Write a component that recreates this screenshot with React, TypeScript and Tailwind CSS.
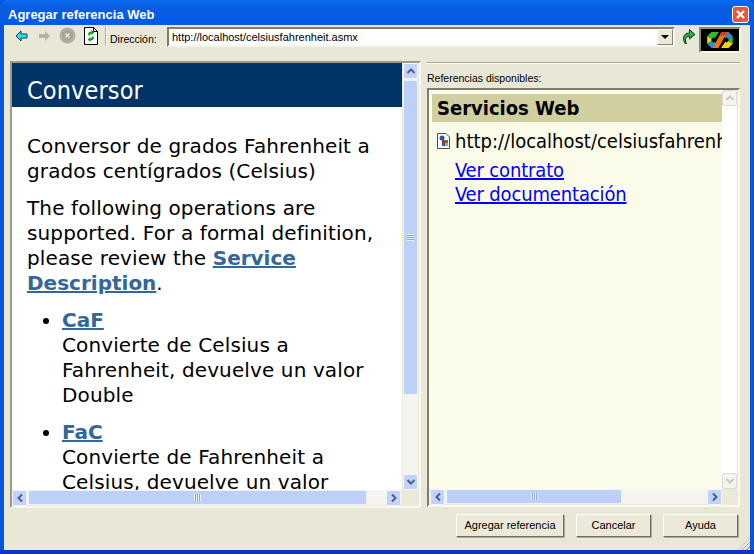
const uiFont = "font-['Liberation_Sans',sans-serif]"

function Chevron({ dir, color = "#4d6185" }: { dir: "up" | "down" | "left" | "right"; color?: string }) {
    const points = {
        up: "1.5,7 5,3.5 8.5,7",
        down: "1.5,3 5,6.5 8.5,3",
        left: "7,1.5 3.5,5 7,8.5",
        right: "3,1.5 6.5,5 3,8.5"
    }[dir]
    return (
        <svg width="10" height="10" viewBox="0 0 10 10">
            <polyline points={points} fill="none" stroke={color} strokeWidth="2" />
        </svg>
    )
}

function ScrollButton({ dir, disabled }: { dir: "up" | "down" | "left" | "right"; disabled?: boolean }) {
    return (
        <div
            className={
                disabled
                    ? "w-[15px] h-[16px] shrink-0 flex items-center justify-center rounded-[2px] border border-[#dcdcd2] bg-[#f4f4ee]"
                    : "w-[15px] h-[16px] shrink-0 flex items-center justify-center rounded-[2px] border border-[#f2f6ff] bg-[#c1d3fb]"
            }
        >
            <Chevron dir={dir} color={disabled ? "#c8c8c0" : "#4d6185"} />
        </div>
    )
}

function HScrollBar({ thumb }: { thumb: number }) {
    return (
        <div className="h-[15px] flex bg-[#f5f4ee]">
            <ScrollButton dir="left" />
            <div
                className="h-[15px] ml-px rounded-[2px] border border-[#eef2fd] bg-[#bcd0f8] flex items-center justify-center shrink-0"
                style={{ width: thumb }}
            >
                <div className="w-[7px] h-[7px] bg-[repeating-linear-gradient(90deg,#eef3fe_0,#eef3fe_1px,#8ba6dc_1px,#8ba6dc_2px)]" />
            </div>
            <div className="flex-1" />
            <ScrollButton dir="right" />
        </div>
    )
}

function Toolbar() {
    return (
        <div className="h-[36px] flex items-start shrink-0">
            <svg className="ml-[11px] mt-[5px]" width="13" height="12" viewBox="0 0 13 12">
                <path d="M6 1 L1 6 L6 11 V8 H12 V4 H6 Z" fill="#2fe0e8" stroke="#06465a" strokeWidth="1" />
            </svg>
            <svg className="ml-[10px] mt-[5px]" width="13" height="12" viewBox="0 0 13 12">
                <path d="M7 1 L12 6 L7 11 V8 H1 V4 H7 Z" fill="#b4b3a6" />
            </svg>
            <svg className="ml-[8px] mt-[2px]" width="17" height="17" viewBox="0 0 17 17">
                <circle cx="8.5" cy="8.5" r="8" fill="#b2b1a4" />
                <circle cx="8.5" cy="8.5" r="5.5" fill="#a5a497" />
                <path d="M6.5 6.5 L10.5 10.5 M10.5 6.5 L6.5 10.5" stroke="#ecebe0" strokeWidth="1.6" />
            </svg>
            <svg className="ml-[8px] mt-[2px]" width="14" height="18" viewBox="0 0 14 18">
                <path d="M1 .5 H9.5 L13.5 4.5 V17.5 H.5 V.5 Z" fill="#fff" stroke="#000" />
                <path d="M9.5 .5 V4.5 H13.5" fill="none" stroke="#000" />
                <path d="M4 8 Q4 4.5 7.5 4.5 L7.5 3 L10.5 5.5 L7.5 8 L7.5 6.5 Q6 6.5 6 8.5 Z" fill="#0e9a28" />
                <path d="M10 10 Q10 13.5 6.5 13.5 L6.5 15 L3.5 12.5 L6.5 10 L6.5 11.5 Q8 11.5 8 9.5 Z" fill="#0e9a28" />
            </svg>
            <div className="ml-[7px] mt-[1px] w-[2px] h-[19px] border-l border-[#aca899] bg-white" />
            <span className={`ml-[3px] mt-[7px] w-[57px] shrink-0 text-[10.5px] leading-[14px] text-black ${uiFont}`}>Dirección:</span>
            <div className="mt-[2px] w-[508px] h-[20px] border-2 border-t-[#7f7d6e] border-l-[#7f7d6e] border-r-[#f6f5ec] border-b-[#f6f5ec] bg-white flex items-center">
                <span className={`flex-1 pl-[3px] text-[11px] leading-[14px] text-black ${uiFont}`}>http://localhost/celsiusfahrenheit.asmx</span>
                <div className="w-[16px] h-[16px] bg-[#ece9d8] border border-t-white border-l-white border-r-[#8a8878] border-b-[#8a8878] flex items-center justify-center">
                    <div className="w-0 h-0 border-x-[4px] border-x-transparent border-t-[4px] border-t-black" />
                </div>
            </div>
            <svg className="ml-[6px] mt-[3px]" width="15" height="17" viewBox="0 0 15 17">
                <path d="M4 15.5 Q0.5 9 5 5.5 L8.5 5 L8.5 1.5 L14 6.5 L8.5 11 L8.5 8 Q5 8.5 4.5 11 Q4 13 5.5 15.5 Z" fill="#2fa84a" stroke="#04431a" strokeWidth="1" />
            </svg>
            <div className="ml-[3px] mt-[2px] w-[42px] h-[26px] border-2 border-t-[#8a8878] border-l-[#8a8878] border-r-[#f6f5ec] border-b-[#f6f5ec] bg-black flex items-center justify-center">
                <svg width="26" height="16" viewBox="0 0 24 15">
                    <path d="M0 4 L4 0 H11 L6 7.5 Z" fill="#35b53a" />
                    <path d="M0 4 V11 L6 7.5 Z" fill="#ecd80e" />
                    <path d="M0 11 L4 15 H11 L6 7.5 Z" fill="#2a8fd8" />
                    <path d="M24 4 L20 0 H13 L18 7.5 Z" fill="#2a8fd8" />
                    <path d="M24 4 V11 L18 7.5 Z" fill="#35b53a" />
                    <path d="M24 11 L20 15 H13 L18 7.5 Z" fill="#ecd80e" />
                    <path d="M6 5 L8.5 7.5 L6 10 L3.5 7.5 Z" fill="#000" />
                    <path d="M18 5 L20.5 7.5 L18 10 L15.5 7.5 Z" fill="#000" />
                    <path d="M13.5 0 H19 L10.5 15 H5 Z" fill="#ef6f17" />
                    <path d="M13.5 0 H19 L17 3.5 H11.5 Z" fill="#e33a12" />
                </svg>
            </div>
        </div>
    )
}

function DocPanel() {
    return (
        <div className="w-[411px] h-[447px] flex flex-col border-2 border-t-[#9b998a] border-l-[#9b998a] border-r-[#f8f7f0] border-b-[#f8f7f0] bg-[#ece9d8]">
            <div className="flex flex-1 min-h-0">
                <div className="w-[390px] bg-white overflow-hidden font-['DejaVu_Sans',sans-serif] text-[20px] leading-[25px] tracking-[0.12px] text-black">
                    <div className="h-[44px] bg-[#003366] text-white pl-[15px] pt-[14px] text-[25px] leading-[28px] font-['DejaVu_Sans_Condensed','DejaVu_Sans',sans-serif]">Conversor</div>
                    <div className="pl-[15px] pr-[6px] pt-[27px]">
                        <p className="whitespace-nowrap">Conversor de grados Fahrenheit a<br />grados centígrados (Celsius)</p>
                        <p className="mt-[12px] whitespace-nowrap">
                            The following operations are<br />
                            supported. For a formal definition,<br />
                            please review the <a className="font-bold tracking-normal text-[#336699] underline">Service</a><br />
                            <a className="font-bold tracking-normal text-[#336699] underline">Description</a>.
                        </p>
                        <ul className="mt-[12px] ml-[35px] list-disc whitespace-nowrap">
                            <li>
                                <a className="font-bold tracking-normal text-[#336699] underline">CaF</a><br />
                                Convierte de Celsius a<br />
                                Fahrenheit, devuelve un valor<br />
                                Double
                            </li>
                            <li className="mt-[12px]">
                                <a className="font-bold tracking-normal text-[#336699] underline">FaC</a><br />
                                Convierte de Fahrenheit a<br />
                                Celsius, devuelve un valor
                            </li>
                        </ul>
                    </div>
                </div>
                <div className="w-[15px] ml-px flex flex-col bg-[#f5f4ee]">
                    <ScrollButton dir="up" />
                    <div className="h-[315px] mt-px rounded-[2px] border border-[#eef2fd] bg-[#bcd0f8] flex items-center justify-center">
                        <div className="w-[7px] h-[7px] bg-[repeating-linear-gradient(0deg,#eef3fe_0,#eef3fe_1px,#8ba6dc_1px,#8ba6dc_2px)]" />
                    </div>
                    <div className="flex-1" />
                    <ScrollButton dir="down" />
                </div>
            </div>
            <div className="w-[389px]">
                <HScrollBar thumb={339} />
            </div>
            <div className="h-px" />
        </div>
    )
}

function ReferencesPanel() {
    return (
        <div className="w-[313px] flex flex-col">
            <div className="mt-[1px] h-[2px] border-t border-[#aca899] bg-white" />
            <div className={`mt-[7px] h-[14px] text-[10.5px] leading-[14px] text-black ${uiFont}`}>Referencias disponibles:</div>
            <div className="mt-[3px] h-[419px] flex flex-col border-2 border-t-[#7f7d6e] border-l-[#7f7d6e] border-r-[#f8f7f0] border-b-[#f8f7f0] bg-[#ece9d8]">
                <div className="flex flex-1 min-h-0">
                    <div className="w-[293px] pl-[3px] pt-[4px] bg-[#fbfbe9] overflow-hidden whitespace-nowrap text-black font-['DejaVu_Sans_Condensed','DejaVu_Sans',sans-serif]">
                        <div className="h-[28px] bg-[#cfcf9f] pl-[5px] font-bold text-[20px] leading-[28px]">Servicios Web</div>
                        <div className="mt-[7px] h-[24px] flex items-center pl-[5px] text-[20px] leading-[24px]">
                            <svg className="shrink-0 mr-[5px]" width="13" height="16" viewBox="0 0 13 16">
                                <path d="M.5 .5 H9 L12.5 4 V15.5 H.5 Z" fill="#fff" stroke="#4a4a4a" />
                                <rect x="5" y="7" width="3" height="3" fill="#d62020" />
                                <rect x="8" y="7" width="3" height="3" fill="#1f9a2f" />
                                <rect x="5" y="10" width="3" height="3" fill="#1f58c8" />
                                <rect x="8" y="10" width="3" height="3" fill="#d9a520" />
                                <circle cx="5" cy="5" r="2.5" fill="#1f58a8" />
                            </svg>
                            http://localhost/celsiusfahrenheit.asmx
                        </div>
                        <div className="mt-[5px] pl-[23px] text-[20px] leading-[24px] tracking-[-0.15px] text-[#0000ff] underline">Ver contrato</div>
                        <div className="pl-[23px] text-[20px] leading-[24px] tracking-[-0.15px] text-[#0000ff] underline">Ver documentación</div>
                    </div>
                    <div className="w-[15px] flex flex-col bg-white">
                        <ScrollButton dir="up" disabled />
                        <div className="flex-1" />
                        <ScrollButton dir="down" disabled />
                    </div>
                </div>
                <div className="w-[293px] pl-px">
                    <HScrollBar thumb={176} />
                </div>
                <div className="h-px" />
            </div>
        </div>
    )
}

function DialogButton({ label, width }: { label: string; width: number }) {
    return (
        <div
            className={`h-[23px] flex items-center justify-center rounded-[1px] border border-t-white border-l-white border-r-[#716f64] border-b-[#716f64] shadow-[1px_1px_0_#aca899] bg-[#ece9d8] text-[11px] text-black ${uiFont}`}
            style={{ width }}
        >
            {label}
        </div>
    )
}

export default function App() {
    return (
        <div className="w-[754px] h-[554px] flex flex-col bg-[#0855dd] overflow-hidden">
            <div className="h-[25px] shrink-0 flex items-start rounded-t-[7px] bg-[linear-gradient(180deg,#0a6cf0_0%,#0a5ce0_30%,#0058ee_100%)] pl-[8px] pr-[5px]">
                <span className={`mt-[7px] text-[13px] leading-[15px] font-bold text-white ${uiFont}`}>Agregar referencia Web</span>
                <div className="ml-auto mt-[6px] w-[17px] h-[17px] rounded-[3px] border border-white bg-[#e2583c] flex items-center justify-center">
                    <svg width="11" height="11" viewBox="0 0 11 11">
                        <path d="M2 2 L9 9 M9 2 L2 9" stroke="#fff" strokeWidth="2.4" />
                    </svg>
                </div>
            </div>
            <div className="flex-1 mx-[4px] flex flex-col bg-[#e9e7d6] relative">
                <Toolbar />
                <div className="flex pl-[6px] gap-[6px]">
                    <DocPanel />
                    <ReferencesPanel />
                </div>
                <div className="flex pl-[452px] gap-[12px] mt-[6px]">
                    <DialogButton label="Agregar referencia" width={108} />
                    <DialogButton label="Cancelar" width={75} />
                    <DialogButton label="Ayuda" width={75} />
                </div>
                <div className="absolute right-0 bottom-0 w-[12px] h-[12px] bg-[repeating-linear-gradient(135deg,transparent_0,transparent_2px,#aca899_2px,#aca899_3px)] [clip-path:polygon(100%_0,100%_100%,0_100%)]" />
            </div>
            <div className="h-[4px] shrink-0 bg-[#0a36c8]" />
        </div>
    )
}
